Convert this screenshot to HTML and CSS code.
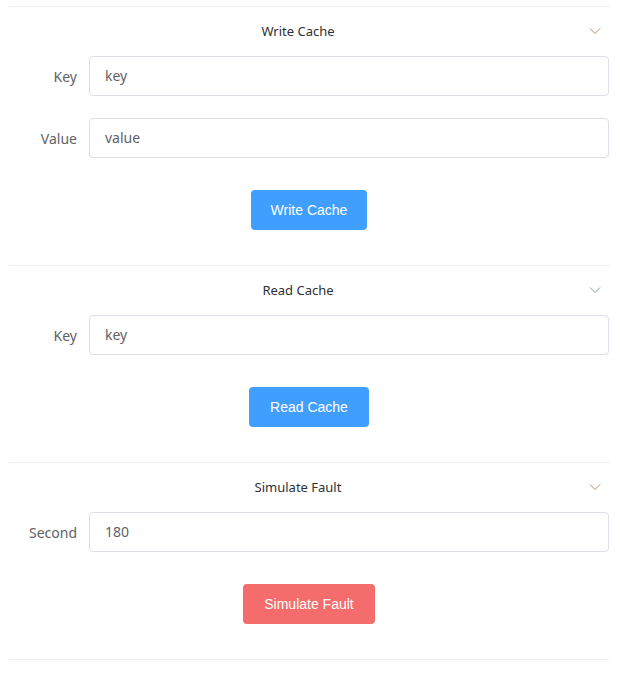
FILE: index.html
```html
<!DOCTYPE html>
<html>
<head>
<meta charset="utf-8">
<link rel="stylesheet" href="styles.css">
</head>
<body>
<div class="collapse">
  <section class="item">
    <div class="header">
      <span class="title">Write Cache</span>
      <svg class="arrow" width="12" height="8" viewBox="0 0 12 8"><path d="M1 1.5 L6 6.5 L11 1.5" fill="none" stroke="#c08a6a" stroke-width="1"/></svg>
    </div>
    <div class="content">
      <div class="row"><label class="label">Key</label><div class="input">key</div></div>
      <div class="row"><label class="label">Value</label><div class="input">value</div></div>
      <div class="actions"><button class="btn btn-primary">Write Cache</button></div>
    </div>
  </section>
  <section class="item">
    <div class="header">
      <span class="title">Read Cache</span>
      <svg class="arrow" width="12" height="8" viewBox="0 0 12 8"><path d="M1 1.5 L6 6.5 L11 1.5" fill="none" stroke="#7aa0b8" stroke-width="1"/></svg>
    </div>
    <div class="content">
      <div class="row"><label class="label">Key</label><div class="input">key</div></div>
      <div class="actions"><button class="btn btn-primary btn-read">Read Cache</button></div>
    </div>
  </section>
  <section class="item">
    <div class="header">
      <span class="title">Simulate Fault</span>
      <svg class="arrow" width="12" height="8" viewBox="0 0 12 8"><path d="M1 1.5 L6 6.5 L11 1.5" fill="none" stroke="#c08a6a" stroke-width="1"/></svg>
    </div>
    <div class="content">
      <div class="row"><label class="label">Second</label><div class="input">180</div></div>
      <div class="actions"><button class="btn btn-danger">Simulate Fault</button></div>
    </div>
  </section>
</div>
</body>
</html>
```

FILE: styles.css
```css
html, body {
  margin: 0;
  padding: 0;
  background: #fff;
}
body {
  padding: 6px 11px 0 9px;
  font-family: "Noto Sans", "Open Sans", "Liberation Sans", sans-serif;
  color: #303133;
}
.collapse {
  width: 600px;
  border-top: 1px solid #EBEEF5;
}
.item {
  border-bottom: 1px solid #EBEEF5;
}
.header {
  display: flex;
  align-items: center;
  height: 48px;
  border-bottom: 1px solid transparent;
}
.title {
  flex: 1;
  text-align: center;
  font-size: 13px;
  color: #303133;
  padding-left: 8px;
}
.arrow {
  display: block;
  margin-right: 8px;
  margin-left: 10px;
  margin-top: -1px;
}
.content {
  padding-bottom: 35px;
}
.row {
  display: flex;
  align-items: center;
  height: 40px;
  margin-bottom: 22px;
}
.label {
  width: 80px;
  box-sizing: border-box;
  padding-right: 12px;
  text-align: right;
  font-size: 14px;
  color: #606266;
}
.input {
  flex: 1;
  height: 40px;
  box-sizing: border-box;
  border: 1px solid #DCDFE6;
  border-radius: 4px;
  padding: 0 15px;
  line-height: 38px;
  font-size: 14px;
  color: #606266;
}
.actions {
  display: flex;
  justify-content: center;
  padding-top: 10px;
}
.btn {
  height: 40px;
  padding: 0 20px;
  border: none;
  border-radius: 4px;
  font-family: "Liberation Sans", Arial, sans-serif;
  font-size: 14px;
  color: #fff;
  cursor: pointer;
}
.btn-primary {
  background: #409EFF;
}
.btn-read {
  padding: 0 21px;
}
.btn-danger {
  background: #F56C6C;
  padding: 0 21px;
}
```
